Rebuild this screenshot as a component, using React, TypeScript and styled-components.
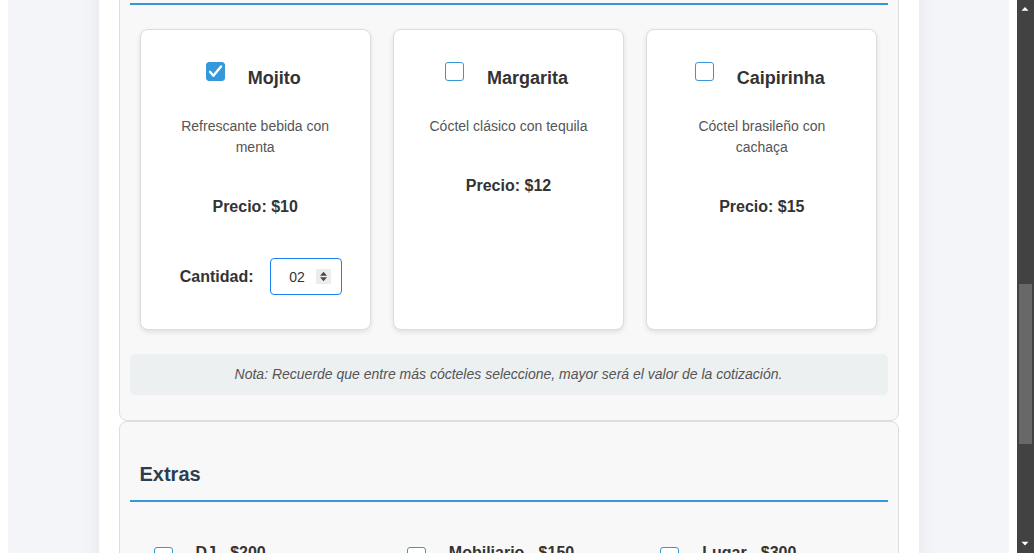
import React, { useLayoutEffect, useRef } from 'react';
import styled, { createGlobalStyle } from 'styled-components';

const GlobalStyle = createGlobalStyle`
  html, body { height: 100%; overflow: hidden; }
  body {
    margin: 0;
    font-family: "Liberation Sans", Arial, sans-serif;
    color: #333;
  }
`;

const Root = styled.div`
  display: flex;
  height: 100vh;
`;

const Viewport = styled.div`
  flex: 1;
  min-width: 0;
  overflow: hidden;
  background: #fff;
`;

const Page = styled.div`
  margin: 8px;
  background: #f4f5f9;
`;

const Container = styled.div`
  max-width: 820px;
  margin: 0 auto;
  padding: 20px;
  box-sizing: border-box;
  background: #fff;
  box-shadow: 0 0 18px rgba(0, 0, 0, 0.07);
`;

const Section = styled.section`
  background: #f8f8f8;
  border: 1px solid #ddd;
  border-radius: 8px;
  padding: 10px;
`;

const SectionTitle = styled.h2`
  margin: 30px 0 0;
  padding: 0 10px 14px;
  font-size: 20px;
  line-height: 24px;
  color: #2c3e50;
  border-bottom: 2px solid #3498db;
`;

const CardGrid = styled.div`
  display: grid;
  grid-template-columns: repeat(3, 1fr);
  gap: 22px;
  padding: 24px 10px;
`;

const Card = styled.div`
  display: flex;
  flex-direction: column;
  align-items: center;
  min-height: 301px;
  box-sizing: border-box;
  padding: 20px;
  background: #fff;
  border: 1px solid #ddd;
  border-radius: 8px;
  box-shadow: 0 2px 5px rgba(0, 0, 0, 0.1);
  text-align: center;
`;

const TitleRow = styled.label`
  display: flex;
  align-items: flex-start;
  gap: 23px;
  margin-right: 4px;
`;

const Box = styled.span<{ $checked?: boolean }>`
  display: flex;
  align-items: center;
  justify-content: center;
  flex: none;
  width: 19px;
  height: 19px;
  box-sizing: border-box;
  margin-top: 12px;
  border: 1px solid #3498db;
  border-radius: 3px;
  background: ${(p) => (p.$checked ? '#3498db' : '#fff')};
`;

const CardName = styled.h3`
  margin: 17px 0 0;
  font-size: 18px;
  line-height: 22px;
  color: #333;
`;

const Desc = styled.p`
  margin: 27px 0 0;
  padding: 0 10px;
  font-size: 14px;
  line-height: 21px;
  color: #555;
`;

const Price = styled.p`
  margin: 39px 0 0;
  font-size: 16px;
  line-height: 20px;
  font-weight: bold;
  color: #333;
`;

const QtyRow = styled.div`
  display: flex;
  align-items: center;
  gap: 16px;
  margin: 41px 0 0 11px;
  font-size: 16px;
  font-weight: bold;
  color: #333;
`;

const QtyBox = styled.div`
  display: flex;
  align-items: center;
  width: 72px;
  height: 37px;
  box-sizing: border-box;
  padding: 0 10px 0 8px;
  border: 1px solid #1a7ff0;
  border-radius: 4px;
  background: #fff;
`;

const QtyInput = styled.input`
  flex: 1;
  width: 0;
  border: none;
  outline: none;
  padding: 0;
  text-align: center;
  font: 14px "Liberation Sans", Arial, sans-serif;
  color: #333;
  background: transparent;
`;

const Note = styled.p`
  margin: 0 0 15px;
  padding: 12px;
  line-height: 17px;
  font-size: 14px;
  font-style: italic;
  color: #555;
  text-align: center;
  background: #ecf0f1;
  border-radius: 5px;
`;

const ExtraItem = styled.label`
  display: flex;
  align-items: flex-start;
  gap: 23px;
  padding: 17px 14px;
  font-size: 16px;
  line-height: 20px;
  font-weight: bold;
  color: #333;
`;

const ExtraBox = styled(Box)`
  margin-top: 4px;
`;

const Scrollbar = styled.div`
  flex: none;
  width: 17px;
  display: flex;
  flex-direction: column;
  background: #424242;
`;

const ScrollButton = styled.div`
  flex: none;
  height: 17px;
`;

const Track = styled.div`
  flex: 1;
  padding: 0 2px;
`;

const Thumb = styled.div`
  margin-top: 267px;
  height: 160px;
  background: #686868;
`;

const cocktails = [
  { name: 'Mojito', desc: 'Refrescante bebida con menta', price: 10, checked: true, qty: '02' },
  { name: 'Margarita', desc: 'Cóctel clásico con tequila', price: 12, checked: false },
  { name: 'Caipirinha', desc: 'Cóctel brasileño con cachaça', price: 15, checked: false },
];

const extras = ['DJ - $200', 'Mobiliario - $150', 'Lugar - $300'];

const Check = () => (
  <svg width="17" height="17" viewBox="0 0 17 17">
    <polyline points="3,8.8 6.4,12.8 14,3.4" fill="none" stroke="#fff" strokeWidth="2.4" strokeLinecap="round" strokeLinejoin="round" />
  </svg>
);

const Spinner = () => (
  <svg width="15" height="15" viewBox="0 0 15 15">
    <rect width="15" height="15" fill="#ececec" />
    <polygon points="4,6.8 11,6.8 7.5,2.8" fill="#4a4a4a" />
    <polygon points="4,8.2 11,8.2 7.5,12.2" fill="#4a4a4a" />
  </svg>
);

const Arrow = ({ down }: { down?: boolean }) => (
  <svg width="17" height="17" viewBox="0 0 17 17">
    <polygon points={down ? '4.5,5.7 11.5,5.7 8,9.4' : '4.5,10.8 11.5,10.8 8,7'} fill="#fff" />
  </svg>
);

export default function App() {
  const pane = useRef<HTMLDivElement>(null);
  const anchor = useRef<HTMLHeadingElement>(null);

  // the page is shown scrolled: the cocktail heading's rule sits at the top edge
  useLayoutEffect(() => {
    const p = pane.current;
    const a = anchor.current;
    if (!p || !a) return;
    const offset = a.getBoundingClientRect().bottom - p.getBoundingClientRect().top;
    p.scrollTop = p.scrollTop + offset - 5;
  }, []);

  return (
    <Root>
      <GlobalStyle />
      <Viewport ref={pane}>
        <Page>
          <Container>
            <Section>
              <SectionTitle ref={anchor}>Selección de Cócteles</SectionTitle>
              <CardGrid>
                {cocktails.map((c) => (
                  <Card key={c.name}>
                    <TitleRow>
                      <Box $checked={c.checked}>{c.checked && <Check />}</Box>
                      <CardName>{c.name}</CardName>
                    </TitleRow>
                    <Desc>{c.desc}</Desc>
                    <Price>Precio: ${c.price}</Price>
                    {c.qty && (
                      <QtyRow>
                        Cantidad:
                        <QtyBox>
                          <QtyInput readOnly value={c.qty} />
                          <Spinner />
                        </QtyBox>
                      </QtyRow>
                    )}
                  </Card>
                ))}
              </CardGrid>
              <Note>Nota: Recuerde que entre más cócteles seleccione, mayor será el valor de la cotización.</Note>
            </Section>

            <Section>
              <SectionTitle>Extras</SectionTitle>
              <CardGrid>
                {extras.map((e) => (
                  <ExtraItem key={e}>
                    <ExtraBox />
                    {e}
                  </ExtraItem>
                ))}
              </CardGrid>
            </Section>
          </Container>
        </Page>
      </Viewport>
      <Scrollbar>
        <ScrollButton>
          <Arrow />
        </ScrollButton>
        <Track>
          <Thumb />
        </Track>
        <ScrollButton>
          <Arrow down />
        </ScrollButton>
      </Scrollbar>
    </Root>
  );
}
